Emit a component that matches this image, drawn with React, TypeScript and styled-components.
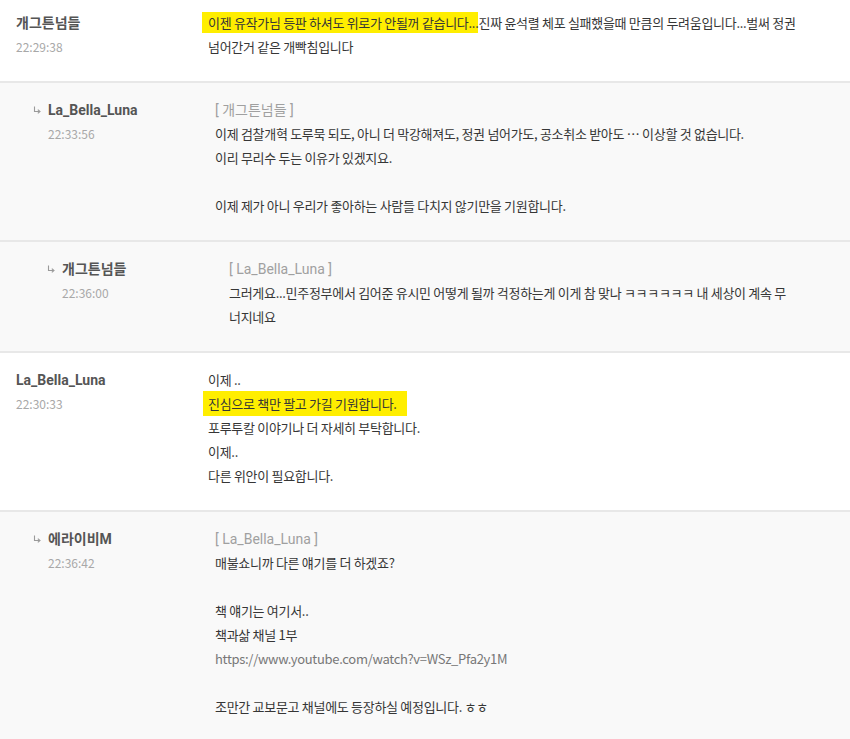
import React from "react";
import styled, { createGlobalStyle } from "styled-components";

const GlobalStyle = createGlobalStyle`
   html, body {
      margin: 0;
      padding: 0;
      background: #fff;
   }

   body {
      font-family: "Noto Sans CJK KR", "Noto Sans", sans-serif;
      -webkit-font-smoothing: antialiased;
   }
`;

const CommentList = styled.ul`
   list-style: none;
   margin: -4px 0 0;
   padding: 0;
`;

// replies step inward by 14px per level, top-level rows sit flush at 16px
const CommentRow = styled.li<{ $depth: number }>`
   display: flex;
   align-items: flex-start;
   padding: 15px 20px 22px ${({ $depth }) => ($depth === 0 ? 16 : 33 + ($depth - 1) * 14)}px;
   background: ${({ $depth }) => ($depth === 0 ? "#fff" : "#f9f9f9")};
   border-bottom: 2px solid #e8e8e8;
`;

const Author = styled.div<{ $reply: boolean }>`
   display: grid;
   grid-template-columns: ${({ $reply }) => ($reply ? "15px auto" : "auto")};
   flex: 0 0 ${({ $reply }) => ($reply ? 182 : 192)}px;
   line-height: 24px;
`;

const ReplyArrow = styled.svg`
   display: block;
   margin-top: 8px;
`;

const AuthorText = styled.div`
   display: flex;
   flex-direction: column;
`;

const Nick = styled.strong`
   font-family: Roboto, "Noto Sans CJK KR", sans-serif;
   font-size: 14px;
   font-weight: 700;
   color: #555;
`;

const Time = styled.span`
   font-size: 12px;
   color: #a8a8a8;
`;

const Body = styled.div`
   flex: 1;
   min-width: 0;
   font-size: 13px;
   line-height: 24px;
   color: #363636;
   letter-spacing: -0.3px;
`;

const Line = styled.div<{ $tone?: "link" }>`
   white-space: nowrap;
   min-height: 24px;
   color: ${({ $tone }) => ($tone === "link" ? "#777" : "inherit")};
`;

const Quote = styled.div`
   font-family: Roboto, "Noto Sans CJK KR", sans-serif;
   font-size: 14px;
   letter-spacing: 0;
   color: #a0a0a0;
   white-space: nowrap;
`;

const Mark = styled.span<{ $boxed?: boolean }>`
   background: #ffee00;
   margin-left: ${({ $boxed }) => ($boxed ? -5 : -6)}px;
   padding: ${({ $boxed }) => ($boxed ? "3px 10px 3px 5px" : "1px 0 1px 6px")};
`;

type Piece = string | { mark: string; boxed?: boolean };

interface CommentData {
   nick: string;
   time: string;
   depth: number;
   replyTo?: string;
   lines: Piece[][];
   linkLine?: number;
}

const comments: CommentData[] = [
   {
      nick: "개그튼넘들",
      time: "22:29:38",
      depth: 0,
      lines: [
         [
            { mark: "이젠 유작가님 등판 하셔도 위로가 안될꺼 같습니다..." },
            "진짜 윤석렬 체포 실패했을때 만큼의 두려움입니다...벌써 정권",
         ],
         ["넘어간거 같은 개빡침입니다"],
      ],
   },
   {
      nick: "La_Bella_Luna",
      time: "22:33:56",
      depth: 1,
      replyTo: "개그튼넘들",
      lines: [
         ["이제 검찰개혁 도루묵 되도, 아니 더 막강해져도, 정권 넘어가도, 공소취소 받아도 … 이상할 것 없습니다."],
         ["이리 무리수 두는 이유가 있겠지요."],
         [],
         ["이제 제가 아니 우리가 좋아하는 사람들 다치지 않기만을 기원합니다."],
      ],
   },
   {
      nick: "개그튼넘들",
      time: "22:36:00",
      depth: 2,
      replyTo: "La_Bella_Luna",
      lines: [
         ["그러게요...민주정부에서 김어준 유시민 어떻게 될까 걱정하는게 이게 참 맞나 ㅋㅋㅋㅋㅋㅋ 내 세상이 계속 무"],
         ["너지네요"],
      ],
   },
   {
      nick: "La_Bella_Luna",
      time: "22:30:33",
      depth: 0,
      lines: [
         ["이제 .."],
         [{ mark: "진심으로 책만 팔고 가길 기원합니다.", boxed: true }],
         ["포루투칼 이야기나 더 자세히 부탁합니다."],
         ["이제.."],
         ["다른 위안이 필요합니다."],
      ],
   },
   {
      nick: "에라이비M",
      time: "22:36:42",
      depth: 1,
      replyTo: "La_Bella_Luna",
      linkLine: 4,
      lines: [
         ["매불쇼니까 다른 얘기를 더 하겠죠?"],
         [],
         ["책 얘기는 여기서.."],
         ["책과삶 채널 1부"],
         ["https://www.youtube.com/watch?v=WSz_Pfa2y1M"],
         [],
         ["조만간 교보문고 채널에도 등장하실 예정입니다. ㅎㅎ"],
         [],
      ],
   },
];

const Arrow: React.FC = () => (
   <ReplyArrow width="8" height="8" viewBox="0 0 8 8">
      <path d="M1.5 0.5 V5.5 H6.5" fill="none" stroke="#9a9a9a" strokeWidth="1.1" />
      <path d="M4.8 3.6 L7 5.5 L4.8 7.4" fill="none" stroke="#9a9a9a" strokeWidth="1.1" />
   </ReplyArrow>
);

const Comment: React.FC<{ data: CommentData }> = ({ data }) => {
   const reply = data.depth > 0;
   return (
      <CommentRow $depth={data.depth}>
         <Author $reply={reply}>
            {reply && <Arrow />}
            <AuthorText>
               <Nick>{data.nick}</Nick>
               <Time>{data.time}</Time>
            </AuthorText>
         </Author>
         <Body>
            {data.replyTo && <Quote>[ {data.replyTo} ]</Quote>}
            {data.lines.map((pieces, i) => (
               <Line key={i} $tone={data.linkLine === i ? "link" : undefined}>
                  {pieces.map((p, j) =>
                     typeof p === "string" ? (
                        <React.Fragment key={j}>{p}</React.Fragment>
                     ) : (
                        <Mark key={j} $boxed={p.boxed}>
                           {p.mark}
                        </Mark>
                     )
                  )}
               </Line>
            ))}
         </Body>
      </CommentRow>
   );
};

const App: React.FC = () => (
   <>
      <GlobalStyle />
      <CommentList>
         {comments.map((c, i) => (
            <Comment key={i} data={c} />
         ))}
      </CommentList>
   </>
);

export default App;
